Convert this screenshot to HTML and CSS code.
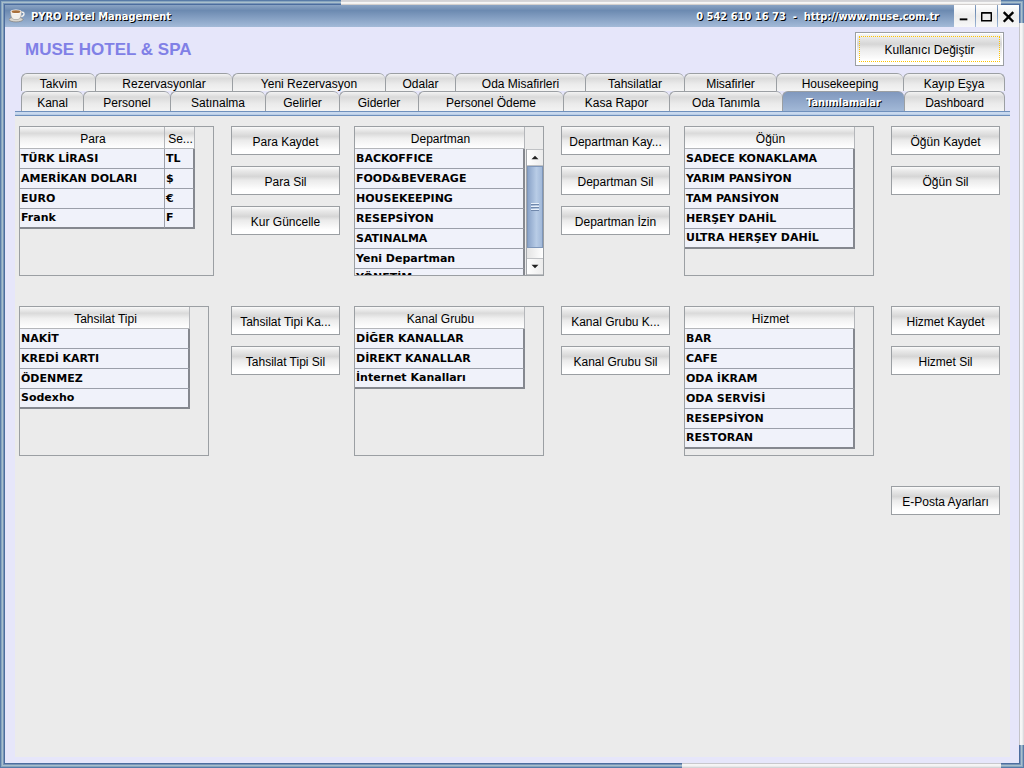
FILE: index.html
```html
<!DOCTYPE html>
<html lang="tr">
<head>
<meta charset="utf-8">
<title>PYRO Hotel Management</title>
<link rel="stylesheet" href="styles.css">
</head>
<body>
<div class="window">
  <span class="edge edge-top"></span>
  <span class="edge edge-right"></span>
  <span class="edge edge-bottom"></span>

  <header class="titlebar">
    <svg class="cup" viewBox="0 0 16 16" aria-hidden="true">
      <ellipse cx="7" cy="11.500" rx="7" ry="2.400" fill="#d9d6d0" stroke="#77736e" stroke-width=".6"/>
      <path d="M12 4.500q3-.8 3 1.500t-3.500 2.500" fill="none" stroke="#efefef" stroke-width="1.400"/>
      <path d="M1.500 3.500q0 7 3.500 8h4q3.500-1 3.500-8z" fill="#f2f0ec" stroke="#8d8a86" stroke-width=".5"/>
      <ellipse cx="7" cy="3.500" rx="5.500" ry="2" fill="#fff"/>
      <ellipse cx="7" cy="3.700" rx="4.500" ry="1.400" fill="#a8703c"/>
    </svg>
    <span class="caption">PYRO Hotel Management</span>
    <span class="caption contact">0 542 610 16 73 &nbsp;- &nbsp;<a href="http://www.muse.com.tr">http://www.muse.com.tr</a></span>
    <div class="controls">
      <button type="button" aria-label="Simge durumuna küçült"><svg viewBox="0 0 22 22"><path d="M6 14.500h8" stroke="#000" stroke-width="2"/></svg></button>
      <button type="button" aria-label="Ekranı kapla"><svg viewBox="0 0 22 22"><path d="M6 8h10v8H6zM5.500 7.500h11" fill="none" stroke="#000" stroke-width="1.500"/></svg></button>
      <button type="button" aria-label="Kapat"><svg viewBox="0 0 22 22"><path d="M6 7l10 10M16 7l-10 10" stroke="#000" stroke-width="2.500"/></svg></button>
    </div>
  </header>

  <div class="body">
    <div class="banner">
      <h1>MUSE HOTEL &amp; SPA</h1>
      <button type="button" class="btn btn-user">Kullanıcı Değiştir</button>
    </div>

    <div class="tabs" role="tablist">
      <div class="tab-row row-back" role="presentation">
        <button type="button" role="tab" class="tab">Takvim</button>
        <button type="button" role="tab" class="tab">Rezervasyonlar</button>
        <button type="button" role="tab" class="tab">Yeni Rezervasyon</button>
        <button type="button" role="tab" class="tab">Odalar</button>
        <button type="button" role="tab" class="tab">Oda Misafirleri</button>
        <button type="button" role="tab" class="tab">Tahsilatlar</button>
        <button type="button" role="tab" class="tab">Misafirler</button>
        <button type="button" role="tab" class="tab">Housekeeping</button>
        <button type="button" role="tab" class="tab">Kayıp Eşya</button>
      </div>
      <div class="tab-row row-front" role="presentation">
        <button type="button" role="tab" class="tab">Kanal</button>
        <button type="button" role="tab" class="tab">Personel</button>
        <button type="button" role="tab" class="tab">Satınalma</button>
        <button type="button" role="tab" class="tab">Gelirler</button>
        <button type="button" role="tab" class="tab">Giderler</button>
        <button type="button" role="tab" class="tab">Personel Ödeme</button>
        <button type="button" role="tab" class="tab">Kasa Rapor</button>
        <button type="button" role="tab" class="tab">Oda Tanımla</button>
        <button type="button" role="tab" class="tab selected" aria-selected="true">Tanımlamalar</button>
        <button type="button" role="tab" class="tab">Dashboard</button>
      </div>
    </div>

    <main class="page" role="tabpanel">
      <section class="group">
        <div class="list">
          <table>
            <thead><tr><th>Para</th><th class="symbol">Se...</th></tr></thead>
            <tbody>
              <tr><td>TÜRK LİRASI</td><td>TL</td></tr>
              <tr><td>AMERİKAN DOLARI</td><td>$</td></tr>
              <tr><td>EURO</td><td>€</td></tr>
              <tr><td>Frank</td><td>F</td></tr>
            </tbody>
          </table>
        </div>
        <div class="actions">
          <button type="button" class="btn">Para Kaydet</button>
          <button type="button" class="btn">Para Sil</button>
          <button type="button" class="btn">Kur Güncelle</button>
        </div>
      </section>

      <section class="group">
        <div class="list">
          <table>
            <thead><tr><th>Departman</th></tr></thead>
            <tbody>
              <tr><td>BACKOFFICE</td></tr>
              <tr><td>FOOD&amp;BEVERAGE</td></tr>
              <tr><td>HOUSEKEEPING</td></tr>
              <tr><td>RESEPSİYON</td></tr>
              <tr><td>SATINALMA</td></tr>
              <tr><td>Yeni Departman</td></tr>
              <tr><td>YÖNETİM</td></tr>
            </tbody>
          </table>
          <div class="scrollbar">
            <button type="button" aria-label="Yukarı"><svg viewBox="0 0 17 17"><path d="M4.500 10.500h8l-4-4z"/></svg></button>
            <div class="track"><div class="thumb"></div></div>
            <button type="button" aria-label="Aşağı"><svg viewBox="0 0 17 17"><path d="M4.500 6.500h8l-4 4z"/></svg></button>
          </div>
        </div>
        <div class="actions">
          <button type="button" class="btn">Departman Kay...</button>
          <button type="button" class="btn">Departman Sil</button>
          <button type="button" class="btn">Departman İzin</button>
        </div>
      </section>

      <section class="group">
        <div class="list">
          <table>
            <thead><tr><th>Öğün</th></tr></thead>
            <tbody>
              <tr><td>SADECE KONAKLAMA</td></tr>
              <tr><td>YARIM PANSİYON</td></tr>
              <tr><td>TAM PANSİYON</td></tr>
              <tr><td>HERŞEY DAHİL</td></tr>
              <tr><td>ULTRA HERŞEY DAHİL</td></tr>
            </tbody>
          </table>
        </div>
        <div class="actions">
          <button type="button" class="btn">Öğün Kaydet</button>
          <button type="button" class="btn">Öğün Sil</button>
        </div>
      </section>

      <section class="group">
        <div class="list narrow">
          <table>
            <thead><tr><th>Tahsilat Tipi</th></tr></thead>
            <tbody>
              <tr><td>NAKİT</td></tr>
              <tr><td>KREDİ KARTI</td></tr>
              <tr><td>ÖDENMEZ</td></tr>
              <tr><td>Sodexho</td></tr>
            </tbody>
          </table>
        </div>
        <div class="actions">
          <button type="button" class="btn">Tahsilat Tipi Ka...</button>
          <button type="button" class="btn">Tahsilat Tipi Sil</button>
        </div>
      </section>

      <section class="group">
        <div class="list">
          <table>
            <thead><tr><th>Kanal Grubu</th></tr></thead>
            <tbody>
              <tr><td>DİĞER KANALLAR</td></tr>
              <tr><td>DİREKT KANALLAR</td></tr>
              <tr><td>İnternet Kanalları</td></tr>
            </tbody>
          </table>
        </div>
        <div class="actions">
          <button type="button" class="btn">Kanal Grubu K...</button>
          <button type="button" class="btn">Kanal Grubu Sil</button>
        </div>
      </section>

      <section class="group">
        <div class="list">
          <table>
            <thead><tr><th>Hizmet</th></tr></thead>
            <tbody>
              <tr><td>BAR</td></tr>
              <tr><td>CAFE</td></tr>
              <tr><td>ODA İKRAM</td></tr>
              <tr><td>ODA SERVİSİ</td></tr>
              <tr><td>RESEPSİYON</td></tr>
              <tr><td>RESTORAN</td></tr>
            </tbody>
          </table>
        </div>
        <div class="actions">
          <button type="button" class="btn">Hizmet Kaydet</button>
          <button type="button" class="btn">Hizmet Sil</button>
        </div>
      </section>

      <section class="group mail">
        <div class="actions">
          <button type="button" class="btn">E-Posta Ayarları</button>
        </div>
      </section>
    </main>
  </div>
</div>
</body>
</html>
```

FILE: styles.css
```css
* {
  box-sizing: border-box;
}

body {
  margin: 0;
  font: 12px/14px "Liberation Sans", Arial, sans-serif;
  color: #000;
}

button {
  margin: 0;
  padding: 0;
  font: inherit;
  color: inherit;
}

/* Window frame */
.window {
  position: relative;
  display: flex;
  flex-direction: column;
  min-height: 100vh;
  padding: 5px;
  background: #e6e6fa;
  box-shadow: inset 0 0 0 1px #587ba8, inset 0 0 0 2px #88a6bf,
    inset 0 0 0 3px #a9bfcc, inset 0 0 0 4px #7895b8, inset 0 0 0 5px #4c6d9e;
}

.edge {
  position: absolute;
}

.edge-top {
  top: 0;
  left: 341px;
  right: 23px;
  height: 5px;
  background: linear-gradient(#d0d0d4, #d8d8da 40%, #f6f6f6 50%, #f0eeec 80%, #b4b0ae);
}

.edge-right {
  top: 23px;
  right: 0;
  bottom: 23px;
  width: 5px;
  background: linear-gradient(to right, #c4c4c8 20%, #f6f6f6 30%, #f4f4f4 60%, #d4d4d8);
}

.edge-bottom {
  left: 682px;
  right: 23px;
  bottom: 0;
  height: 5px;
  background: linear-gradient(#c8c8cc 20%, #f6f6f6 30%, #f2f2f2 60%, #cacace);
}

/* Title bar */
.titlebar {
  display: flex;
  align-items: center;
  height: 22px;
  padding-left: 4px;
  background: linear-gradient(#8aa3c4, #6c8ab1 25%, #a3bad8);
}

.cup {
  width: 16px;
  height: 16px;
  margin-right: 6px;
}

.caption {
  padding-top: 2px;
  font: bold 11px/14px "DejaVu Sans Condensed", "DejaVu Sans", sans-serif;
  color: #fff;
  text-shadow: 1px 1px 0 #000;
  white-space: nowrap;
}

.caption a {
  color: inherit;
  text-decoration: none;
}

.contact {
  margin-left: auto;
  margin-right: 15px;
}

.controls {
  display: flex;
  gap: 1px;
  height: 22px;
}

.controls button {
  width: 21px;
  border: 0;
  background: linear-gradient(#fff, #ececec 50%, #f8f8f8);
}

.controls svg {
  display: block;
  width: 21px;
  height: 22px;
}

/* Client area */
.body {
  flex: 1;
  display: flex;
  flex-direction: column;
  padding: 0 9px 6px 10px;
}

.banner {
  display: flex;
  justify-content: space-between;
  align-items: center;
  height: 46px;
  padding: 0 6px 2px 10px;
}

.banner h1 {
  margin: 0;
  padding-top: 2px;
  font-size: 17px;
  line-height: 20px;
  color: #8080e6;
}

.btn {
  height: 29px;
  border: 1px solid #9b9fa3;
  background: linear-gradient(#fafafa, #e8e8e8 15%, #d6d6d6 35%, #ebebeb 50%, #fff 85%, #fff);
  white-space: nowrap;
  padding-top: 2px;
}

.btn-user {
  width: 149px;
  height: 34px;
  box-shadow: inset 0 0 0 1px #fff;
  outline: 1px dotted #ffc400;
  outline-offset: -5px;
}

/* Tabs */
.tabs {
  padding: 0 5px 0 6px;
}

.tab-row {
  display: grid;
}

.row-back {
  grid-template-columns: 74fr 137fr 153fr 70fr 130fr 99fr 92fr 127fr 102fr;
  height: 18px;
}

.row-front {
  grid-template-columns: 62fr 87fr 95fr 74fr 79fr 145fr 106fr 113fr 122fr 101fr;
  height: 20px;
}

.tab {
  min-width: 0;
  height: 100%;
  border: solid #9b9fa3;
  border-width: 1px 0 0 1px;
  border-radius: 6px 6px 0 0;
  background: linear-gradient(#f4f4f4, #dadada 25%, #ebebeb 60%, #f4f4f4);
  line-height: 18px;
  padding-top: 2px;
  white-space: nowrap;
}

.row-back .tab {
  padding-top: 3px;
  line-height: 14px;
}

.tab:last-child {
  border-right-width: 1px;
}

.tab.selected {
  background: linear-gradient(#8098be, #a4bad8);
  font: bold 11px/18px "DejaVu Sans Condensed", "DejaVu Sans", sans-serif;
  color: #fff;
  text-shadow: 1px 1px 0 #000;
}

/* Page */
.page {
  flex: 1;
  display: grid;
  grid-template-columns: 321fr 316fr 316fr;
  align-content: start;
  gap: 30px 14px;
  padding: 15px 10px 10px 4px;
  background:
    linear-gradient(#6f90bc 0 1px, #c9d9ee 1px 3px, #b9cde6 3px 4px, #6f90bc 4px) top / 100% 5px no-repeat,
    #ebebeb;
}

.group {
  display: grid;
  grid-template-columns: 1fr 109px;
  gap: 17px;
}

.actions {
  grid-column: 2;
  display: flex;
  flex-direction: column;
  gap: 11px;
}

.mail {
  grid-column: 3;
}

.list {
  display: grid;
  grid-template-columns: 1fr 18px;
  align-items: start;
  height: 150px;
  border: 1px solid #9b9fa3;
  overflow: hidden;
}

.narrow {
  margin-right: 5px;
}

table {
  width: 100%;
  table-layout: fixed;
  border-collapse: separate;
  border-spacing: 0;
}

th {
  height: 22px;
  padding: 2px 0 0 2px;
  border: solid #b4b6ba;
  border-width: 0 1px 1px 0;
  background: linear-gradient(#f8f8f8, #dadada 30%, #f0f0f0 55%, #fff);
  font-weight: normal;
  text-align: center;
  white-space: nowrap;
}

.symbol {
  width: 30px;
}

td {
  height: 20px;
  padding: 1px 0 0 1px;
  border: solid #9b9fa9;
  border-width: 0 1px 1px 0;
  background: #f0f2fa;
  font: bold 11px/18px "DejaVu Sans", Verdana, sans-serif;
  white-space: nowrap;
}

td:last-child {
  border-right: 2px solid #85888f;
}

tbody tr:last-child td {
  padding-top: 0;
  border-bottom: 2px solid #85888f;
}

/* Scroll bar */
.scrollbar {
  display: flex;
  flex-direction: column;
  height: 126px;
  margin-top: 22px;
  margin-left: 1px;
  border-left: 1px solid #a4a7ab;
}

.scrollbar button {
  height: 17px;
  border: 1px solid #c0c2c5;
  border-width: 1px 0;
  background: linear-gradient(to right, #fff, #ececec);
}

.scrollbar svg {
  display: block;
  width: 100%;
  height: 15px;
  fill: #222;
}

.track {
  flex: 1;
  background: linear-gradient(to right, #e4e4e4, #fff);
}

.thumb {
  height: 82px;
  border: 1px solid #7f97ba;
  background:
    repeating-linear-gradient(#e8f0fa 0 1px, #7088ac 1px 2px, transparent 2px 3px) center / 8px 9px no-repeat,
    linear-gradient(to right, #8ba4c9, #b8cce6 60%, #a2b9d9);
}
```
